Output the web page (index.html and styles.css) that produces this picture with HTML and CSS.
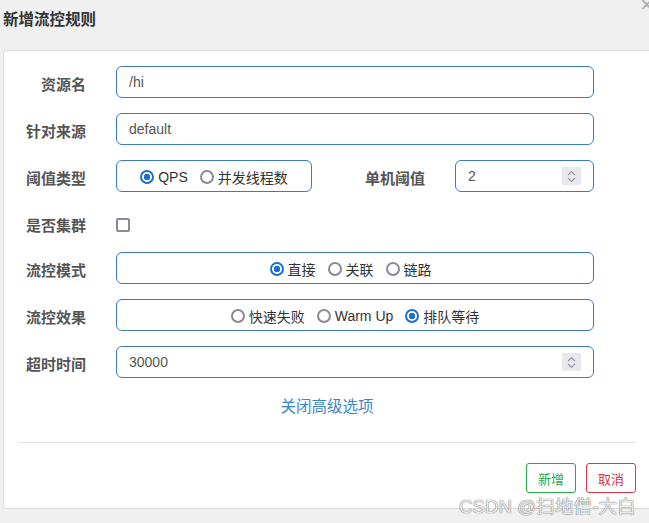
FILE: index.html
```html
<!DOCTYPE html>
<html lang="zh">
<head>
<meta charset="utf-8">
<title>新增流控规则</title>
<link rel="stylesheet" href="styles.css">
</head>
<body>
<div class="dialog">
  <div class="header">
    <h4 class="title">新增流控规则</h4>
    <span class="close">×</span>
  </div>
  <div class="panel">
    <div class="form">
      <div class="row">
        <label class="lbl">资源名</label>
        <div class="input wide">/hi</div>
      </div>
      <div class="row">
        <label class="lbl">针对来源</label>
        <div class="input wide">default</div>
      </div>
      <div class="row">
        <label class="lbl">阈值类型</label>
        <div class="input group narrow">
          <span class="opt"><span class="radio on"></span>QPS</span>
          <span class="opt"><span class="radio"></span>并发线程数</span>
        </div>
        <label class="lbl lbl2">单机阈值</label>
        <div class="input num small">2<span class="spin"><svg width="9" height="13" viewBox="0 0 9 13"><path d="M1 5 L4.5 1.5 L8 5 M1 8 L4.5 11.5 L8 8" fill="none" stroke="#9a9aa6" stroke-width="1.2"/></svg></span></div>
      </div>
      <div class="row row-check">
        <label class="lbl">是否集群</label>
        <span class="check"></span>
      </div>
      <div class="row">
        <label class="lbl">流控模式</label>
        <div class="input group wide shift">
          <span class="opt"><span class="radio on"></span>直接</span>
          <span class="opt"><span class="radio"></span>关联</span>
          <span class="opt"><span class="radio"></span>链路</span>
        </div>
      </div>
      <div class="row">
        <label class="lbl">流控效果</label>
        <div class="input group wide">
          <span class="opt"><span class="radio"></span>快速失败</span>
          <span class="opt"><span class="radio"></span>Warm Up</span>
          <span class="opt"><span class="radio on"></span>排队等待</span>
        </div>
      </div>
      <div class="row">
        <label class="lbl">超时时间</label>
        <div class="input num wide">30000<span class="spin"><svg width="9" height="13" viewBox="0 0 9 13"><path d="M1 5 L4.5 1.5 L8 5 M1 8 L4.5 11.5 L8 8" fill="none" stroke="#9a9aa6" stroke-width="1.2"/></svg></span></div>
      </div>
      <div class="toggle"><a class="link">关闭高级选项</a></div>
    </div>
    <div class="footer">
      <button class="btn btn-ok">新增</button>
      <button class="btn btn-cancel">取消</button>
    </div>
  </div>
  <div class="watermark">CSDN @扫地僧-大白</div>
</div>
</body>
</html>
```
FILE: styles.css
```css
html, body {
  margin: 0;
  padding: 0;
  overflow: hidden;
  background: #f0f0f0;
}
body {
  font-family: "Liberation Sans", "Noto Sans CJK SC", sans-serif;
  color: #333;
  width: 649px;
  height: 523px;
}
.dialog {
  position: relative;
  height: 523px;
}
.header {
  position: relative;
  height: 50px;
}
.title {
  margin: 0;
  padding: 8px 0 0 3px;
  font-family: "Noto Sans CJK SC", sans-serif;
  font-size: 15.5px;
  font-weight: bold;
  line-height: 20px;
  color: #333;
}
.close {
  position: absolute;
  right: -4px;
  top: -8px;
  font-size: 22px;
  color: #aaa;
  font-family: "Liberation Sans", sans-serif;
}
.panel {
  margin-left: 3px;
  width: 700px;
  background: #fff;
  border: 1px solid #dcdcdc;
  border-radius: 4px;
  box-sizing: border-box;
  padding: 15px 0 15px 0;
}
.form {
  display: flex;
  flex-direction: column;
  gap: 15px;
}
.row {
  display: flex;
  align-items: center;
  height: 32px;
}
.lbl {
  width: 82px;
  text-align: right;
  margin-right: 30px;
  font-family: "Noto Sans CJK SC", sans-serif;
  font-weight: bold;
  font-size: 15px;
  color: #555;
  padding-top: 3px;
  line-height: 20px;
}
.lbl2 {
  width: 113px;
}
.input {
  box-sizing: border-box;
  height: 32px;
  border: 1px solid #3a7bbf;
  border-radius: 6px;
  padding: 0 12px;
  display: flex;
  align-items: center;
  font-size: 14px;
  color: #555;
}
.wide { width: 478px; }
.narrow { width: 196px; }
.small { width: 139px; }
.num {
  justify-content: space-between;
  padding-right: 12px;
}
.spin {
  width: 19px;
  height: 18px;
  background: #e9e9ed;
  display: flex;
  align-items: center;
  justify-content: center;
}
.group {
  justify-content: center;
  gap: 12px;
  padding: 0;
  padding-top: 2px;
}
.group.shift {
  padding-right: 9px;
}
.opt {
  display: flex;
  align-items: center;
  font-family: "Liberation Sans", "Noto Sans CJK SC", sans-serif;
  font-size: 14px;
  color: #333;
}
.radio {
  box-sizing: border-box;
  width: 14px;
  height: 14px;
  border: 2px solid #8a8a96;
  border-radius: 50%;
  margin-right: 4px;
  background: #fff;
}
.radio.on {
  border-color: #1a6fd8;
  background: radial-gradient(circle, #1a6fd8 0 3px, #fff 3.5px);
}
.row-check {
  height: 30px;
  align-items: flex-start;
}
.row-check .lbl {
  padding-top: 8px;
}
.check {
  box-sizing: border-box;
  width: 14px;
  height: 14px;
  border: 2px solid #8a8a96;
  border-radius: 2px;
  margin-top: 11px;
}
.toggle {
  width: 646px;
  text-align: center;
  margin-top: 2px;
  line-height: 20px;
}
.link {
  font-family: "Noto Sans CJK SC", sans-serif;
  font-size: 15.5px;
  color: #3d85c8;
}
.footer {
  margin: 25px 0 0 14px;
  width: 618px;
  border-top: 1px solid #e2e2e2;
  padding-top: 20px;
  display: flex;
  justify-content: flex-end;
  gap: 10px;
}
.btn {
  width: 50px;
  height: 30px;
  background: #fff;
  border: 1px solid;
  border-radius: 3px;
  font-family: "Noto Sans CJK SC", sans-serif;
  font-size: 13px;
  padding: 0;
}
.btn-ok {
  border-color: #28a745;
  color: #28a745;
}
.btn-cancel {
  border-color: #dc3545;
  color: #dc3545;
}
.watermark {
  position: absolute;
  left: 459px;
  top: 491px;
  font-family: "Liberation Sans", "Noto Sans CJK SC", sans-serif;
  font-size: 18.7px;
  color: rgba(255, 255, 255, 0.85);
  text-shadow: 0 0 1px #777, 0 0 1px #777;
  white-space: nowrap;
}
```
